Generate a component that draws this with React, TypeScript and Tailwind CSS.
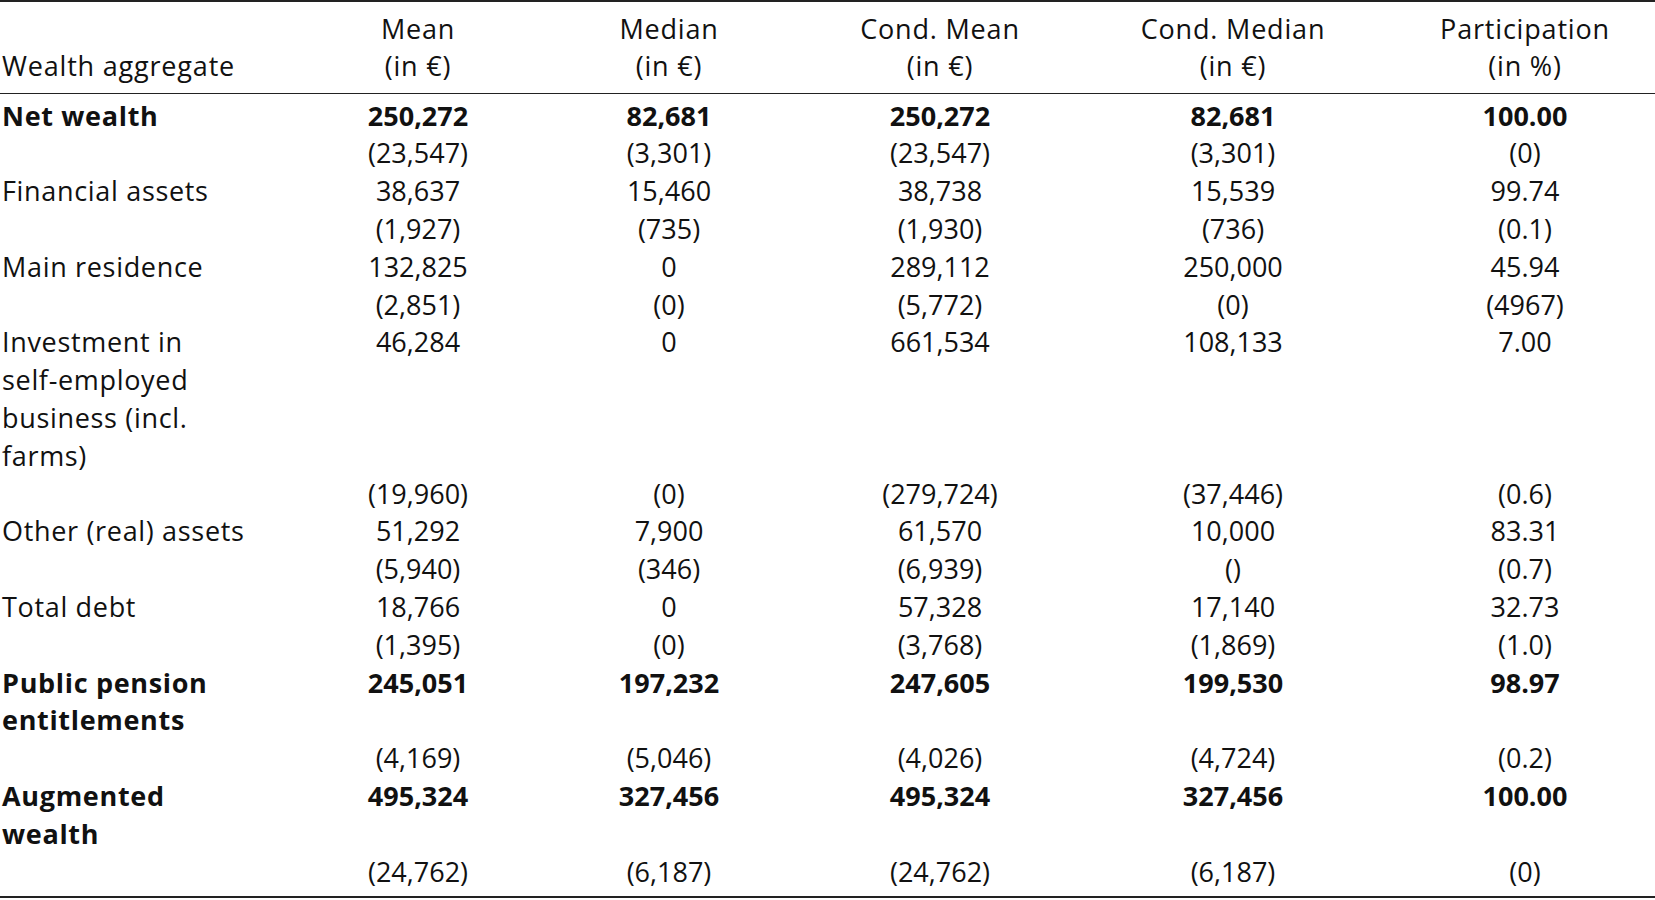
import React from "react";

type Row = {
  label: string[];
  bold?: boolean;
  values: string[];
  se: string[];
};

const rows: Row[] = [
  {
    label: ["Net wealth"],
    bold: true,
    values: ["250,272", "82,681", "250,272", "82,681", "100.00"],
    se: ["(23,547)", "(3,301)", "(23,547)", "(3,301)", "(0)"],
  },
  {
    label: ["Financial assets"],
    values: ["38,637", "15,460", "38,738", "15,539", "99.74"],
    se: ["(1,927)", "(735)", "(1,930)", "(736)", "(0.1)"],
  },
  {
    label: ["Main residence"],
    values: ["132,825", "0", "289,112", "250,000", "45.94"],
    se: ["(2,851)", "(0)", "(5,772)", "(0)", "(4967)"],
  },
  {
    label: ["Investment in", "self-employed", "business (incl.", "farms)"],
    values: ["46,284", "0", "661,534", "108,133", "7.00"],
    se: ["(19,960)", "(0)", "(279,724)", "(37,446)", "(0.6)"],
  },
  {
    label: ["Other (real) assets"],
    values: ["51,292", "7,900", "61,570", "10,000", "83.31"],
    se: ["(5,940)", "(346)", "(6,939)", "()", "(0.7)"],
  },
  {
    label: ["Total debt"],
    values: ["18,766", "0", "57,328", "17,140", "32.73"],
    se: ["(1,395)", "(0)", "(3,768)", "(1,869)", "(1.0)"],
  },
  {
    label: ["Public pension", "entitlements"],
    bold: true,
    values: ["245,051", "197,232", "247,605", "199,530", "98.97"],
    se: ["(4,169)", "(5,046)", "(4,026)", "(4,724)", "(0.2)"],
  },
  {
    label: ["Augmented", "wealth"],
    bold: true,
    values: ["495,324", "327,456", "495,324", "327,456", "100.00"],
    se: ["(24,762)", "(6,187)", "(24,762)", "(6,187)", "(0)"],
  },
];

const headers: [string, string][] = [
  ["Mean", "(in €)"],
  ["Median", "(in €)"],
  ["Cond. Mean", "(in €)"],
  ["Cond. Median", "(in €)"],
  ["Participation", "(in %)"],
];

export default function App() {
  return (
    <div
      className="w-[1655px] h-[900px] bg-white text-[#111] overflow-hidden"
      style={{ fontFamily: "'Open Sans', 'Noto Sans', sans-serif" }}
    >
      <table className="w-[1655px] table-fixed border-collapse text-[27px] leading-[37.8px]">
        <colgroup>
          <col className="w-[307px]" />
          <col className="w-[222px]" />
          <col className="w-[280px]" />
          <col className="w-[262px]" />
          <col className="w-[324px]" />
          <col className="w-[260px]" />
        </colgroup>
        <thead>
          <tr className="border-t-2 border-b border-[#222]">
            <th className="pt-[7.5px] pb-[7.5px] pl-[2px] text-left align-bottom font-normal whitespace-nowrap tracking-[0.03em]">
              Wealth aggregate
            </th>
            {headers.map(([a, b]) => (
              <th
                key={a}
                className="pt-[7.5px] pb-[7.5px] text-center align-bottom font-normal whitespace-nowrap tracking-[0.03em]"
              >
                <div>{a}</div>
                <div>{b}</div>
              </th>
            ))}
          </tr>
        </thead>
        <tbody className="border-b-2 border-[#222]">
          {rows.map((r, i) => {
            const first = i === 0;
            const last = i === rows.length - 1;
            return (
              <React.Fragment key={r.label.join(" ")}>
                <tr className={r.bold ? "font-bold" : ""}>
                  <td
                    className={`pl-[2px] align-top whitespace-nowrap tracking-[0.025em] ${first ? "pt-[3px]" : ""}`}
                  >
                    {r.label.map((l) => (
                      <div key={l}>{l}</div>
                    ))}
                  </td>
                  {r.values.map((v, j) => (
                    <td key={j} className={`text-center align-top ${first ? "pt-[3px]" : ""}`}>
                      {v}
                    </td>
                  ))}
                </tr>
                <tr>
                  <td className={last ? "pb-[6px]" : ""}></td>
                  {r.se.map((v, j) => (
                    <td key={j} className={`text-center align-top ${last ? "pb-[6px]" : ""}`}>
                      {v}
                    </td>
                  ))}
                </tr>
              </React.Fragment>
            );
          })}
        </tbody>
      </table>
    </div>
  );
}
